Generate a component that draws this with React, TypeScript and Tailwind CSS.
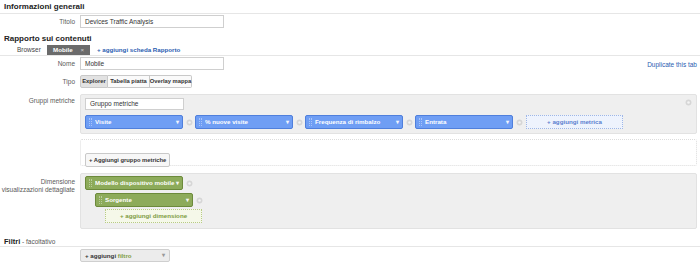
import React from "react";

interface PillProps {
    label: string
    color: "blue" | "green"
}

function Grip() {
    return (
        <span className="flex gap-[1px] mr-[3px] opacity-40">
            <span className="w-[1px] h-[8px] border-l border-dotted border-white" />
            <span className="w-[1px] h-[8px] border-l border-dotted border-white" />
        </span>
    )
}

function Gear() {
    return (
        <svg width="7" height="7" viewBox="0 0 10 10" className="shrink-0">
            <circle cx="5" cy="5" r="4.2" fill="#d6d6d6" />
            <circle cx="5" cy="5" r="1.8" fill="#f4f4f4" />
        </svg>
    )
}

function Pill({ label, color }: PillProps) {
    const cls = color === "blue"
        ? "bg-[#6f9ef4] border-[#4f7fdc]"
        : "bg-[#8dab5a] border-[#6c8a3b]"
    return (
        <div className={`flex items-center h-[14px] w-[98px] rounded-[2px] border px-[3px] text-white font-bold text-[6.2px] whitespace-nowrap ${cls}`}>
            <Grip />
            <span className="flex-1 overflow-hidden">{label}</span>
            <span className="text-[6px] opacity-90">▾</span>
        </div>
    )
}

function Row({ label, children, className = "" }: { label: React.ReactNode, children: React.ReactNode, className?: string }) {
    return (
        <div className={`flex items-start gap-[5px] ${className}`}>
            <div className="w-[75px] shrink-0 text-right text-[6.5px] leading-[9px] text-[#5a5a5a] whitespace-nowrap">{label}</div>
            <div className="flex-1 min-w-0">{children}</div>
        </div>
    )
}

function TextInput({ value }: { value: string }) {
    return (
        <div className="w-[144px] h-[13px] border border-[#cfcfcf] bg-white px-[4px] text-[6.5px] leading-[11px] text-[#333]">
            {value}
        </div>
    )
}

export default function App() {
    return (
        <div className="w-[700px] h-[270px] bg-white overflow-hidden" style={{ fontFamily: '"Liberation Sans", Arial, sans-serif' }}>
            <div className="h-[14px] pl-[4px] border-b border-[#e6e6e6] text-[8px] font-bold text-[#222] leading-[12px] pt-[1px]">
                Informazioni generali
            </div>

            <Row label={<span className="leading-[13px]">Titolo</span>} className="mt-[1px]">
                <TextInput value="Devices Traffic Analysis" />
            </Row>

            <div className="pl-[4px] mt-[5px] text-[8px] font-bold text-[#222] leading-[12px]">Rapporto sui contenuti</div>

            <div className="flex items-center h-[11px] border-b border-[#e6e6e6]">
                <span className="ml-[17px] w-[30px] text-[6.5px] text-[#444]">Browser</span>
                <div className="flex items-center justify-between w-[43px] h-[10px] bg-[#6b6b6b] px-[6px] text-[6.2px] text-white font-bold">
                    <span>Mobile</span>
                    <span className="font-normal text-[#cfcfcf]">×</span>
                </div>
                <span className="ml-[7px] text-[6.2px] text-[#2a5db0] font-bold">+ aggiungi scheda Rapporto</span>
            </div>

            <Row label={<span className="leading-[13px]">Nome</span>} className="mt-[1px]">
                <div className="flex items-end justify-between pr-[3px]">
                    <TextInput value="Mobile" />
                    <span className="text-[6.5px] text-[#2a5db0]">Duplicate this tab</span>
                </div>
            </Row>

            <Row label={<span className="leading-[13px]">Tipo</span>} className="mt-[5px]">
                <div className="flex h-[13px] w-[112px] text-[5.8px] text-[#333] font-bold whitespace-nowrap">
                    <div className="flex items-center justify-center w-[28px] border border-[#c9c9c9] bg-[#e2e2e2] rounded-l-[2px]">Explorer</div>
                    <div className="flex items-center justify-center w-[42px] border-y border-r border-[#c9c9c9] bg-[#fafafa]">Tabella piatta</div>
                    <div className="flex items-center justify-center w-[42px] border-y border-r border-[#c9c9c9] bg-[#fafafa] rounded-r-[2px]">Overlay mappa</div>
                </div>
            </Row>

            <Row label={<span className="block pt-[2px]">Gruppi metriche</span>} className="mt-[6px]">
                <div className="mr-[3px] h-[40px] bg-[#efefef] border border-[#e2e2e2] rounded-[2px] px-[4px] pt-[3px] relative">
                    <div className="w-[99px] h-[12px] border border-[#cfcfcf] bg-white px-[4px] text-[6.5px] leading-[10px] text-[#333]">Gruppo metriche</div>
                    <div className="absolute right-[4px] top-[4px]"><Gear /></div>
                    <div className="flex items-center mt-[5px]">
                        <Pill label="Visite" color="blue" />
                        <div className="w-[12px] flex justify-center"><Gear /></div>
                        <Pill label="% nuove visite" color="blue" />
                        <div className="w-[12px] flex justify-center"><Gear /></div>
                        <Pill label="Frequenza di rimbalzo" color="blue" />
                        <div className="w-[12px] flex justify-center"><Gear /></div>
                        <Pill label="Entrata" color="blue" />
                        <div className="w-[13px] flex justify-center"><Gear /></div>
                        <div className="flex items-center justify-center w-[97px] h-[14px] border border-dotted border-[#9fb7e6] bg-[#eef3fd] text-[6.2px] font-bold text-[#5b7fcf]">
                            + aggiungi metrica
                        </div>
                    </div>
                </div>
                <div className="mr-[3px] mt-[5px] h-[27px] border border-dotted border-[#dcdcdc] rounded-[2px] px-[4px] pt-[5px]">
                    <div className="inline-flex items-center h-[14px] px-[3px] border border-[#c9c9c9] bg-[#f7f7f7] rounded-[2px] text-[5.8px] font-bold text-[#333] whitespace-nowrap">
                        + Aggiungi gruppo metriche
                    </div>
                </div>
            </Row>

            <Row label={<span className="block pt-[5px] leading-[8px]">Dimensione<br />visualizzazioni dettagliate</span>} className="mt-[7px]">
                <div className="mr-[3px] h-[56px] bg-[#efefef] border border-[#e2e2e2] rounded-[2px] px-[4px] pt-[2px]">
                    <div className="flex items-center">
                        <Pill label="Modello dispositivo mobile" color="green" />
                        <div className="w-[12px] flex justify-center"><Gear /></div>
                    </div>
                    <div className="flex items-center mt-[3px] ml-[10px]">
                        <Pill label="Sorgente" color="green" />
                        <div className="w-[12px] flex justify-center"><Gear /></div>
                    </div>
                    <div className="flex items-center justify-center mt-[2px] ml-[20px] w-[97px] h-[14px] border border-dotted border-[#b8cb86] bg-[#f5f8e9] text-[6.2px] font-bold text-[#7d9b3f]">
                        + aggiungi dimensione
                    </div>
                </div>
            </Row>

            <div className="mt-[8px] h-[10px] pl-[4px] border-b border-[#e6e6e6] text-[6.5px] text-[#555] leading-[10px]">
                <span className="text-[7.5px] font-bold text-[#222]">Filtri</span> - facoltativo
            </div>

            <div className="ml-[80px] mt-[2px] flex items-center justify-between w-[90px] h-[13px] px-[4px] border border-[#cfcfcf] bg-[#ececec] rounded-[2px] text-[6.2px] font-bold whitespace-nowrap">
                <span className="text-[#333]">+ aggiungi <span className="text-[#7d9b3f]">filtro</span></span>
                <span className="text-[6px] text-[#999]">▾</span>
            </div>
        </div>
    )
}
